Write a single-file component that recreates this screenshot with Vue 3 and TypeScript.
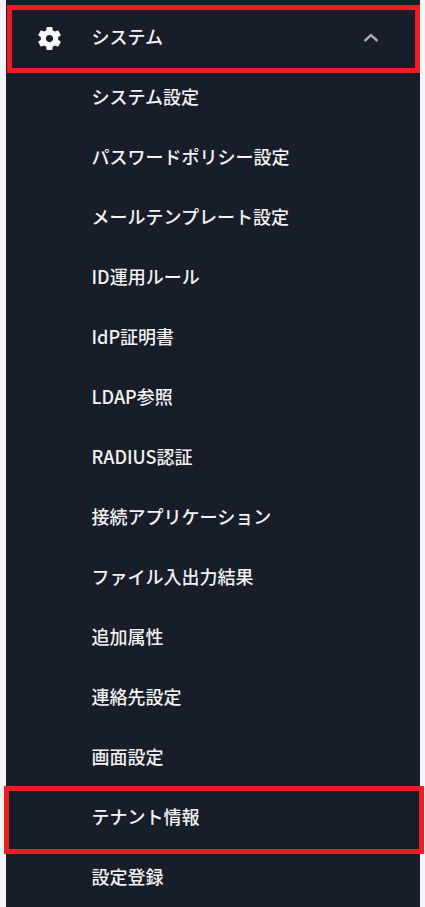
<script setup lang="ts">
const items: string[] = [
  'システム設定',
  'パスワードポリシー設定',
  'メールテンプレート設定',
  'ID運用ルール',
  'IdP証明書',
  'LDAP参照',
  'RADIUS認証',
  '接続アプリケーション',
  'ファイル入出力結果',
  '追加属性',
  '連絡先設定',
  '画面設定',
  'テナント情報',
  '設定登録',
]
</script>

<template>
  <div class="page">
    <nav class="sidebar">
      <div class="row head">
        <svg class="gear" viewBox="0 0 24 24" aria-hidden="true">
          <path d="M19.14 12.94c.04-.3.06-.61.06-.94 0-.32-.02-.64-.07-.94l2.03-1.58a.49.49 0 0 0 .12-.61l-1.92-3.32a.488.488 0 0 0-.59-.22l-2.39.96c-.5-.38-1.03-.7-1.62-.94l-.36-2.54a.484.484 0 0 0-.48-.41h-3.84c-.24 0-.43.17-.47.41l-.36 2.54c-.59.24-1.13.57-1.62.94l-2.39-.96c-.22-.08-.47 0-.59.22L2.74 8.87c-.12.21-.08.47.12.61l2.03 1.58c-.05.3-.09.63-.09.94s.02.64.07.94l-2.03 1.58a.49.49 0 0 0-.12.61l1.92 3.32c.12.22.37.29.59.22l2.39-.96c.5.38 1.03.7 1.62.94l.36 2.54c.05.24.24.41.48.41h3.84c.24 0 .44-.17.47-.41l.36-2.54c.59-.24 1.13-.56 1.62-.94l2.39.96c.22.08.47 0 .59-.22l1.92-3.32c.12-.22.07-.47-.12-.61l-2.01-1.58zM12 15c-1.65 0-3-1.35-3-3s1.35-3 3-3 3 1.35 3 3-1.35 3-3 3z" />
        </svg>
        <span class="label">システム</span>
        <svg class="chev" viewBox="0 0 16 10" aria-hidden="true">
          <path d="M1.5 9 L8 3.2 L14.5 9" />
        </svg>
      </div>
      <div v-for="item in items" :key="item" class="row">
        <span class="label">{{ item }}</span>
      </div>
    </nav>
    <div class="mark mark-top"></div>
    <div class="mark mark-tenant"></div>
  </div>
</template>

<style scoped>
.page {
  position: relative;
  height: 907px;
  overflow: hidden;
  background: #f5f5f5;
  padding: 0 5px 0 6px;
  box-sizing: border-box;
}
.sidebar {
  background: #181e29;
  height: 907px;
  padding-top: 7px;
  box-sizing: border-box;
  font-family: "Noto Sans CJK JP", "Noto Sans", sans-serif;
  color: #f2f2f2;
  font-size: 18px;
  font-weight: 500;
}
.row {
  display: flex;
  align-items: center;
  height: 60px;
  padding-left: 85.5px;
  box-sizing: border-box;
  position: relative;
}
.head {
  padding-left: 28.5px;
}
.gear {
  width: 29px;
  height: 29px;
  fill: #f7f7f7;
  margin-top: 3px;
  margin-right: 28px;
  flex: none;
}
.label {
  line-height: 24px;
  position: relative;
  top: -1px;
}
.chev {
  width: 16px;
  height: 10px;
  margin-left: auto;
  margin-right: 41px;
  fill: none;
  stroke: #a9abae;
  stroke-width: 2.4;
}
.mark {
  position: absolute;
  border: 5px solid #ee1c25;
  box-sizing: border-box;
}
.mark-top {
  left: 7px;
  top: 5px;
  width: 413px;
  height: 68px;
}
.mark-tenant {
  left: 4px;
  top: 786px;
  width: 420px;
  height: 68px;
}
</style>
